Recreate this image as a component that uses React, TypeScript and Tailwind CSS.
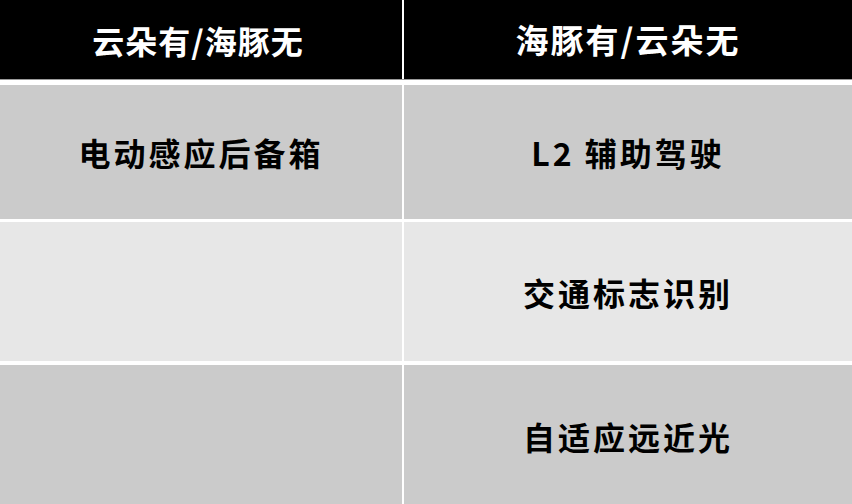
const font = { fontFamily: '"Noto Sans CJK SC", "Noto Sans", sans-serif' }

type Row = {
  left: string
  right: string
  tone: string
  height: string
  gap: string
}

const rows: Row[] = [
  { left: '电动感应后备箱', right: 'L2 辅助驾驶', tone: 'bg-[#cbcbcb]', height: 'h-[134px]', gap: 'mt-[5px]' },
  { left: '', right: '交通标志识别', tone: 'bg-[#e7e7e7]', height: 'h-[139px]', gap: 'mt-[3px]' },
  { left: '', right: '自适应远近光', tone: 'bg-[#cbcbcb]', height: 'h-[142px]', gap: 'mt-[4px]' }
]

export default function App() {
  return (
    <div className="h-[504px] w-[852px] overflow-hidden bg-white" style={font}>
      <div className="grid h-[80px] grid-cols-[402px_1fr] gap-x-[2px] border-b border-[#9a9a9a]">
        <div className="flex items-center justify-center bg-black pr-[6px] text-[32px] font-bold tracking-[1px] text-white">
          云朵有/海豚无
        </div>
        <div className="flex items-center justify-center bg-black text-[33px] font-bold tracking-[2px] text-white">
          海豚有/云朵无
        </div>
      </div>

      {rows.map((row, i) => (
        <div key={i} className={`grid grid-cols-[402px_1fr] gap-x-[2px] ${row.gap} ${row.height}`}>
          <div
            className={`flex items-center justify-center text-[32px] font-bold tracking-[3px] text-black ${row.tone}`}
          >
            {row.left}
          </div>
          <div
            className={`flex items-center justify-center text-[32px] font-bold tracking-[3px] text-black ${row.tone}`}
          >
            {row.right}
          </div>
        </div>
      ))}
    </div>
  )
}
